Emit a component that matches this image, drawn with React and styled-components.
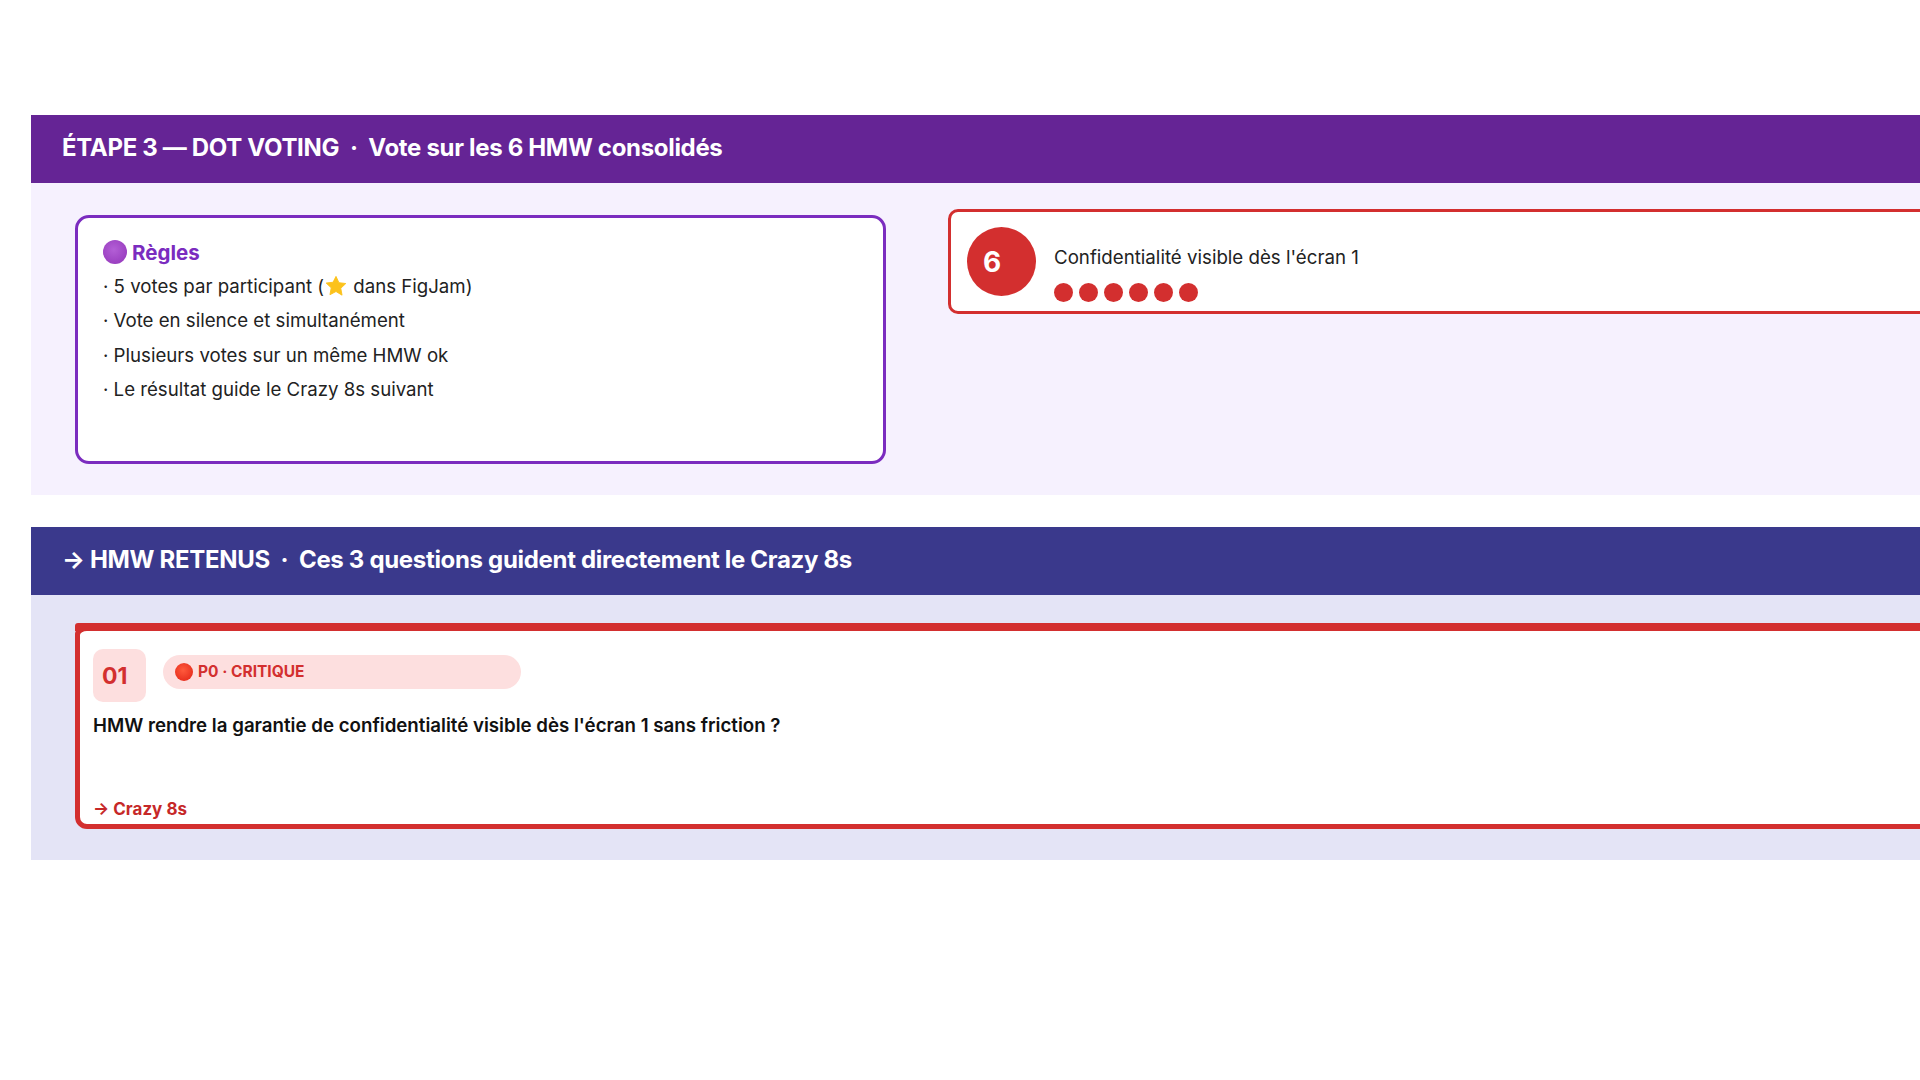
import React from 'react';
import styled, { createGlobalStyle } from 'styled-components';

const GlobalStyle = createGlobalStyle`
  html, body {
    margin: 0;
    padding: 0;
    background: #ffffff;
    overflow: hidden;
  }
  * {
    box-sizing: border-box;
  }
`;

const Page = styled.div`
  width: 1920px;
  height: 1080px;
  padding: 115px 0 0 31px;
  overflow: hidden;
  display: flex;
  flex-direction: column;
  gap: 32px;
  font-family: Inter, "Liberation Sans", sans-serif;
  color: #1c1c1c;
`;

const Section = styled.section`
  width: 2400px;
  flex: none;
`;

const Banner = styled.h2`
  margin: 0;
  height: 68px;
  padding: 0 31px 4px;
  display: flex;
  align-items: center;
  white-space: pre;
  font-size: 24px;
  font-weight: 700;
  letter-spacing: -0.32px;
  color: #ffffff;
  background: ${({ $bg }) => $bg};
`;

const VoteBody = styled.div`
  height: 312px;
  padding: 26px 44px 0;
  display: flex;
  align-items: flex-start;
  gap: 62px;
  background: #f6f1fe;
`;

const RulesCard = styled.div`
  width: 811px;
  height: 249px;
  margin-top: 6px;
  padding: 21px 25px;
  flex: none;
  background: #ffffff;
  border: 3px solid #7b2cbf;
  border-radius: 14px;
`;

const RulesTitle = styled.div`
  height: 26px;
  display: flex;
  align-items: center;
  gap: 5px;
  font-size: 20.5px;
  font-weight: 700;
  color: #7b2cbf;
`;

const RulesList = styled.ul`
  margin: 4px 0 0;
  padding: 0;
  list-style: none;
`;

const RulesItem = styled.li`
  height: 34.3px;
  display: flex;
  align-items: center;
  white-space: pre;
  font-size: 18.65px;
  color: #222222;
`;

const Emoji = styled.svg`
  flex: none;
  margin: ${({ $margin }) => $margin || '0'};
`;

const VoteCard = styled.div`
  width: 1300px;
  height: 105px;
  padding: 0 0 0 16px;
  display: flex;
  align-items: center;
  gap: 18px;
  flex: none;
  background: #ffffff;
  border: 3px solid #d32f2f;
  border-radius: 10px;
`;

const VoteCount = styled.div`
  width: 69px;
  height: 69px;
  padding-left: 16px;
  display: flex;
  align-items: center;
  flex: none;
  border-radius: 50%;
  background: #d32f2f;
  color: #ffffff;
  font-size: 28px;
  font-weight: 700;
`;

const VoteInfo = styled.div`
  display: flex;
  flex-direction: column;
  gap: 13px;
  padding-top: 24px;
`;

const VoteLabel = styled.div`
  font-size: 18.7px;
  line-height: 24px;
  color: #222222;
`;

const Dots = styled.div`
  display: flex;
  gap: 6px;
`;

const Dot = styled.span`
  width: 19px;
  height: 19px;
  border-radius: 50%;
  background: #d32f2f;
`;

const RetainedBody = styled.div`
  height: 265px;
  padding: 28px 44px 0;
  background: #e4e4f6;
`;

const HmwCard = styled.article`
  width: 2000px;
  height: 206px;
  padding: 18px 0 0 13px;
  position: relative;
  background: #ffffff;
  border: 5px solid #d32f2f;
  border-top-width: 8px;
  border-radius: 12px;

  &::before {
    content: '';
    position: absolute;
    top: -8px;
    left: -5px;
    width: 40px;
    height: 8px;
    border-radius: 3px 0 0 0;
    background: #d32f2f;
  }
`;

const HmwHead = styled.div`
  display: flex;
  align-items: center;
  gap: 17px;
`;

const HmwNumber = styled.div`
  width: 53px;
  height: 53px;
  padding-left: 9px;
  display: flex;
  align-items: center;
  border-radius: 10px;
  background: #fddfdf;
  color: #d32f2f;
  font-size: 23px;
  font-weight: 700;
`;

const Priority = styled.div`
  width: 358px;
  height: 34px;
  margin-top: -8px;
  padding-left: 12px;
  display: flex;
  align-items: center;
  gap: 5px;
  border-radius: 17px;
  background: #fddfdf;
  color: #d32f2f;
  font-size: 15.5px;
  font-weight: 700;
`;

const HmwQuestion = styled.p`
  margin: 11px 0 0;
  font-size: 18.7px;
  line-height: 26px;
  font-weight: 600;
  color: #111111;
`;

const HmwLink = styled.div`
  margin-top: 59px;
  font-size: 17px;
  line-height: 22px;
  font-weight: 700;
  color: #c62828;
`;

function ColorDot({ size, light, dark }) {
  const id = `dot-${dark.slice(1)}`;
  return (
    <Emoji width={size} height={size} viewBox="0 0 24 24">
      <defs>
        <radialGradient id={id} cx="45%" cy="40%" r="60%">
          <stop offset="0%" stopColor={light} />
          <stop offset="100%" stopColor={dark} />
        </radialGradient>
      </defs>
      <circle cx="12" cy="12" r="12" fill={`url(#${id})`} />
    </Emoji>
  );
}

function StarEmoji() {
  return (
    <Emoji width="22" height="22" viewBox="0 0 24 24" $margin="0 1px">
      <path
        d="M12 1.5l3.2 6.9 7.5.9-5.5 5.2 1.4 7.5L12 18l-6.6 3.5 1.4-7.5-5.5-5.2 7.5-.9z"
        fill="#fcc21b"
        stroke="#fcc21b"
        strokeLinejoin="round"
      />
    </Emoji>
  );
}

const dots = [1, 2, 3, 4, 5, 6];

export default function App() {
  return (
    <>
      <GlobalStyle />
      <Page>
        <Section>
          <Banner $bg="#652495">{'ÉTAPE 3 — DOT VOTING  ·  Vote sur les 6 HMW consolidés'}</Banner>
          <VoteBody>
            <RulesCard>
              <RulesTitle>
                <ColorDot size={24} light="#b35fd6" dark="#9a3fc0" />
                Règles
              </RulesTitle>
              <RulesList>
                <RulesItem>· 5 votes par participant (<StarEmoji /> dans FigJam)</RulesItem>
                <RulesItem>· Vote en silence et simultanément</RulesItem>
                <RulesItem>· Plusieurs votes sur un même HMW ok</RulesItem>
                <RulesItem>· Le résultat guide le Crazy 8s suivant</RulesItem>
              </RulesList>
            </RulesCard>
            <VoteCard>
              <VoteCount>6</VoteCount>
              <VoteInfo>
                <VoteLabel>Confidentialité visible dès l'écran 1</VoteLabel>
                <Dots>
                  {dots.map((d) => <Dot key={d} />)}
                </Dots>
              </VoteInfo>
            </VoteCard>
          </VoteBody>
        </Section>
        <Section>
          <Banner $bg="#3a398c">{'→ HMW RETENUS  ·  Ces 3 questions guident directement le Crazy 8s'}</Banner>
          <RetainedBody>
            <HmwCard>
              <HmwHead>
                <HmwNumber>01</HmwNumber>
                <Priority>
                  <ColorDot size={18} light="#ff5a3c" dark="#e8301f" />
                  P0 · CRITIQUE
                </Priority>
              </HmwHead>
              <HmwQuestion>HMW rendre la garantie de confidentialité visible dès l'écran 1 sans friction ?</HmwQuestion>
              <HmwLink>→ Crazy 8s</HmwLink>
            </HmwCard>
          </RetainedBody>
        </Section>
      </Page>
    </>
  );
}
